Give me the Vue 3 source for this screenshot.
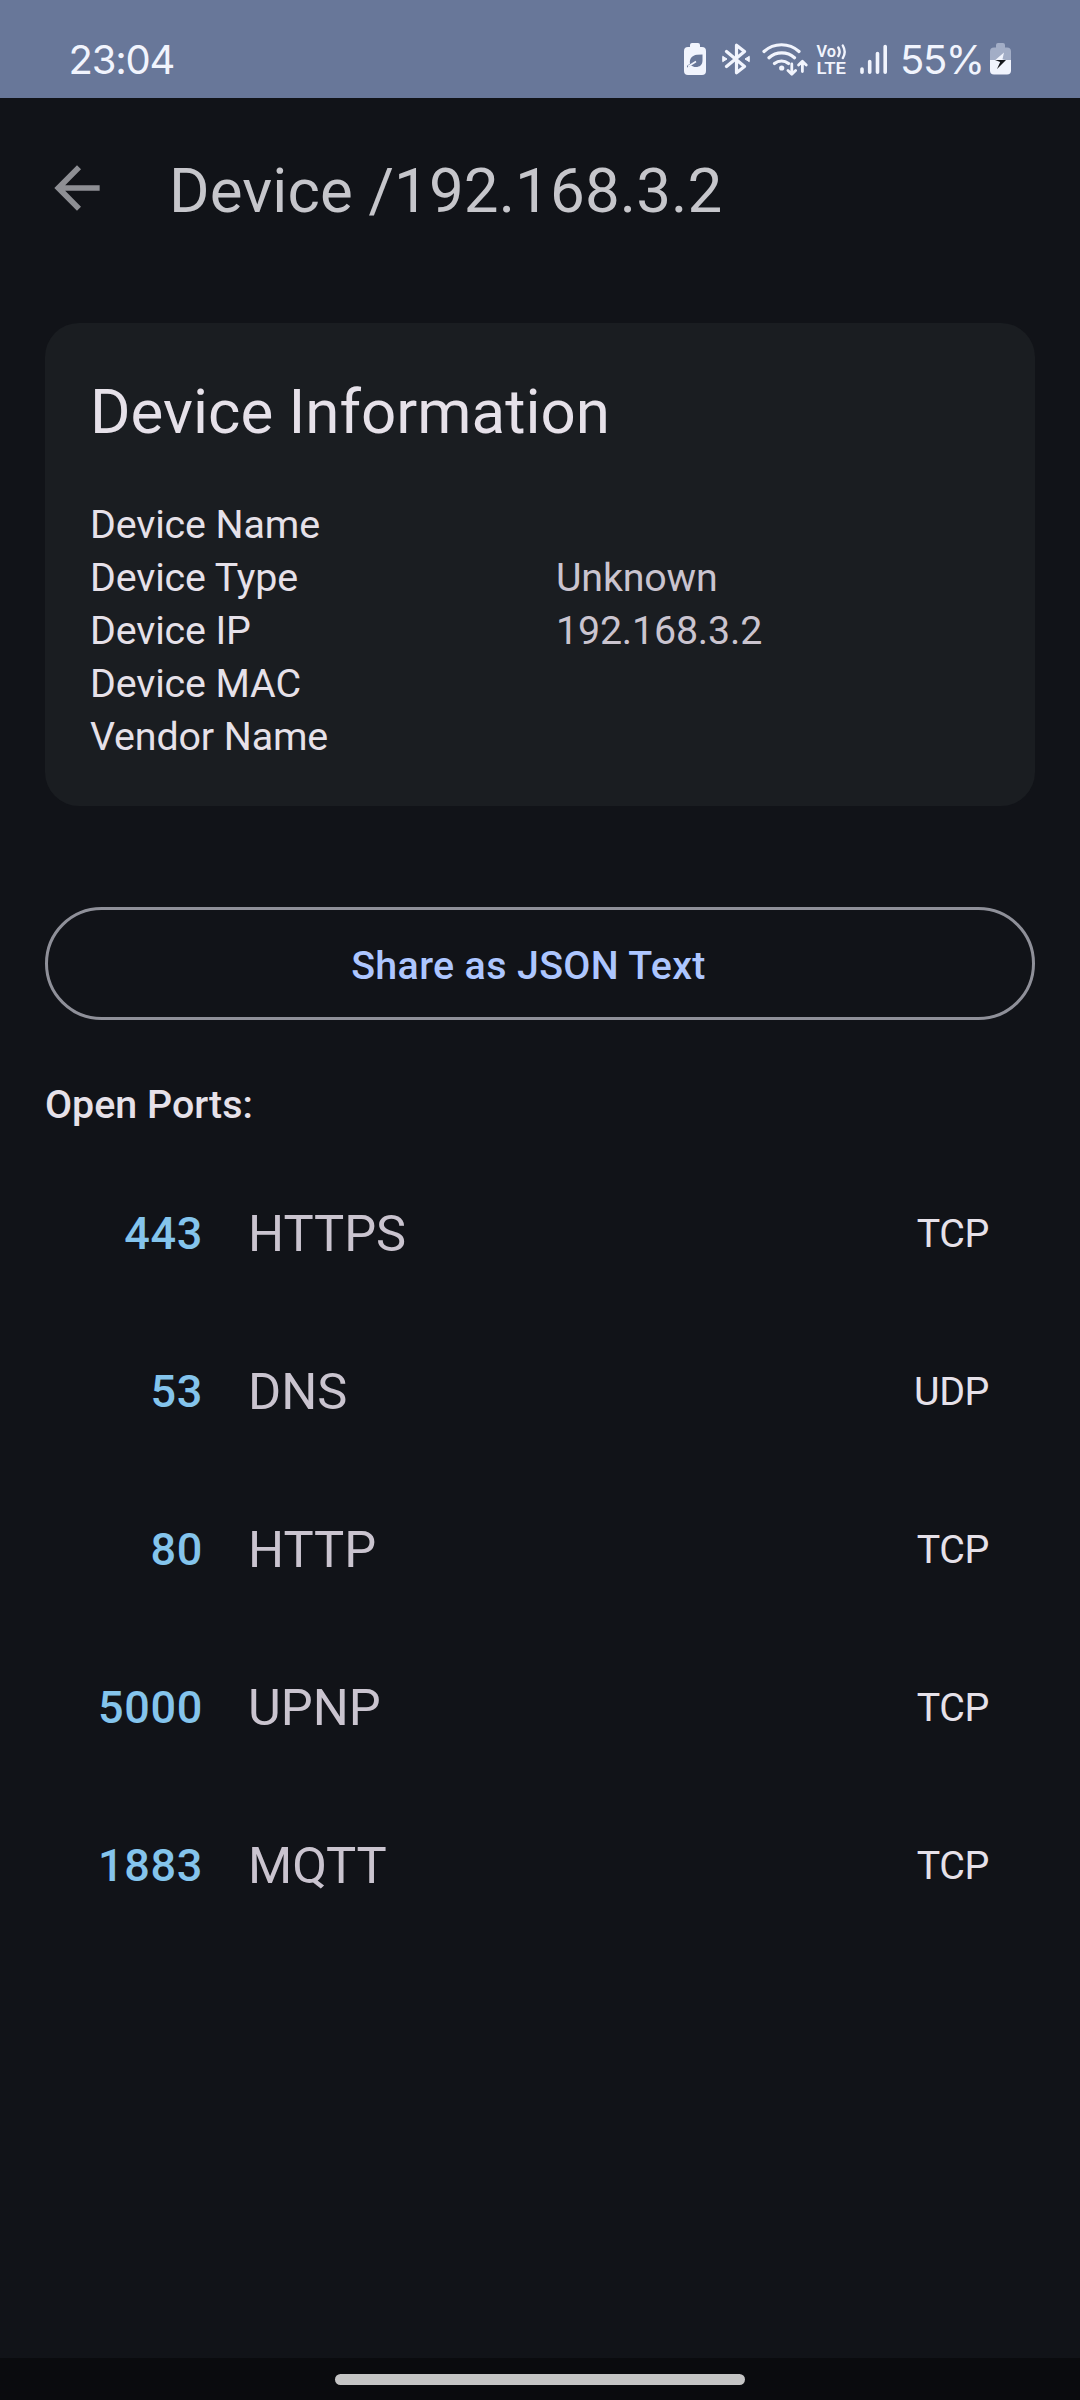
<script setup>
const info = [
  { label: 'Device Name', value: '' },
  { label: 'Device Type', value: 'Unknown' },
  { label: 'Device IP', value: '192.168.3.2' },
  { label: 'Device MAC', value: '' },
  { label: 'Vendor Name', value: '' },
]
const ports = [
  { port: 443, name: 'HTTPS', protocol: 'TCP' },
  { port: 53, name: 'DNS', protocol: 'UDP' },
  { port: 80, name: 'HTTP', protocol: 'TCP' },
  { port: 5000, name: 'UPNP', protocol: 'TCP' },
  { port: 1883, name: 'MQTT', protocol: 'TCP' },
]
</script>

<template>
  <div class="screen">
    <header class="status">
      <span class="clock">23:04</span>
      <div class="tray">
        <svg class="i-eco" width="22" height="32" viewBox="0 0 22 32">
          <path fill="#f1f4fd" d="M6 4V2a2 2 0 0 1 2-2h6a2 2 0 0 1 2 2v2h2a4 4 0 0 1 4 4v20a4 4 0 0 1-4 4H4a4 4 0 0 1-4-4V8a4 4 0 0 1 4-4z" />
          <path fill="#687799" d="M18.500 11.500v6c0 4.500-3 6.500-6.500 6.500-2.200 0-3.700-.6-4.700-1.500L3 24.500v-1.800l3-2c-.8-5 2.200-8.400 7-8.900z" />
          <path d="M4 23.500 12 18.500" stroke="#f1f4fd" stroke-width="1.500" />
        </svg>
        <svg class="i-bt" width="28" height="32" viewBox="0 0 28 32" fill="none" stroke="#f1f4fd" stroke-width="3.200" stroke-linejoin="round" stroke-linecap="round">
          <path d="M4.500 8.500 22.500 23.500 14.500 29.800V2.200L22.500 8.500 4.500 23.500" />
          <path d="M1 13.500 5 16 1 18.500zM27 13.500 23 16 27 18.500z" fill="#f1f4fd" stroke-width="1" />
        </svg>
        <svg class="i-wifi" width="46" height="34" viewBox="0 0 46 34" fill="none" stroke="#f1f4fd" stroke-width="3.200" stroke-linecap="round" stroke-linejoin="round">
          <path d="M2 9.500a26 26 0 0 1 35 0M7 15.700a19 19 0 0 1 25.500 0M12.500 21.500a11 11 0 0 1 14 0" />
          <circle cx="19.700" cy="26" r="2.600" fill="#f1f4fd" stroke="none" />
          <path d="M29.800 22v10M26 28.500l3.800 3.700 3.800-3.700M40.400 29.500V19.500M36.600 23l3.800-3.700L44.200 23" stroke-width="2.800" />
        </svg>
        <svg class="i-lte" width="32" height="32" viewBox="0 0 32 32" fill="#f1f4fd">
          <text x="0.500" y="13.500" textLength="19.500" lengthAdjust="spacingAndGlyphs">Vo</text>
          <text x="0.500" y="31" textLength="29.500" lengthAdjust="spacingAndGlyphs">LTE</text>
          <path d="M22.300 4.500a8 8 0 0 1 0 8.500M26.800 2.500a12 12 0 0 1 0 12.500" fill="none" stroke="#f1f4fd" stroke-width="2.400" stroke-linecap="round" />
        </svg>
        <svg class="i-sig" width="28" height="31" viewBox="0 0 28 31" stroke="#f1f4fd" stroke-width="3.600" stroke-linecap="round">
          <path d="M2 25v3.200M9.700 17.500v10.700M17.500 9.500v18.700M25.200 2.500v25.700" />
        </svg>
        <span class="pct">55%</span>
        <svg class="i-bat" width="22" height="32" viewBox="0 0 22 32">
          <path fill="#a2adc6" d="M6 4.500V2a2 2 0 0 1 2-2h5a2 2 0 0 1 2 2v2.500h2a4 4 0 0 1 4 4V17H0V8.500a4 4 0 0 1 4-4z" />
          <path fill="#f1f4fd" d="M0 17h21v10.500a4 4 0 0 1-4 4H4a4 4 0 0 1-4-4z" />
          <path fill="#f1f4fd" d="M14 9.500 5 17.300H16l-3.500-1z" />
          <path fill="#16181d" d="M5 17h11L7 26l3.200-7z" />
        </svg>
      </div>
    </header>

    <div class="appbar">
      <svg class="back" width="68" height="68" viewBox="0 0 24 24" fill="#8e8f94"><path d="M20 11H7.830l5.590-5.590L12 4l-8 8 8 8 1.410-1.410L7.830 13H20v-2z" /></svg>
      <h1>Device /192.168.3.2</h1>
    </div>

    <section class="card">
      <h2>Device Information</h2>
      <div v-for="row in info" :key="row.label" class="row">
        <span class="label">{{ row.label }}</span>
        <span class="value">{{ row.value }}</span>
      </div>
    </section>

    <button class="share">Share as JSON Text</button>

    <h3>Open Ports:</h3>
    <div v-for="p in ports" :key="p.port" class="port">
      <span class="num">{{ p.port }}</span>
      <span class="name">{{ p.name }}</span>
      <span class="proto">{{ p.protocol }}</span>
    </div>

    <footer class="nav"><div class="handle"></div></footer>
  </div>
</template>

<style>
body { margin: 0; background: #111318; }
</style>

<style scoped>
.screen { width: 1080px; height: 2400px; display: flex; flex-direction: column; background: #111318; font-family: Roboto, sans-serif; overflow: hidden; }
h1, h2, h3 { margin: 0; font-weight: 400; }
.status { height: 98px; flex: none; box-sizing: border-box; padding: 20px 68px 0 68.500px; display: flex; justify-content: space-between; align-items: center; background: #687799; color: #f1f4fd; font-family: Inter, sans-serif; font-size: 40px; }
.clock { letter-spacing: -1.200px; }
.tray { display: flex; align-items: center; }
.tray svg { flex: none; display: block; }
.i-bt { margin-left: 16px; }
.i-wifi { margin-left: 12.500px; }
.i-lte { margin-left: 8px; overflow: visible; font: 600 17px Roboto, sans-serif; }
.i-sig { margin-left: 12px; }
.pct { margin-left: 12px; width: 85.500px; letter-spacing: -1.400px; }
.i-bat { margin-left: 4.500px; }
.appbar { height: 180px; flex: none; box-sizing: border-box; padding-left: 43px; display: flex; align-items: center; }
h1 { font-size: 61.875px; line-height: 80px; margin-left: 58px; padding-top: 6px; letter-spacing: 0.120px; color: #c6c6cb; }
.card { margin: 45px 45px 0; height: 483px; flex: none; box-sizing: border-box; padding: 45px; border-radius: 34px; background: #1a1d21; }
h2 { font-size: 61.875px; line-height: 88px; margin-bottom: 42px; color: #e6e1e9; }
.row { display: flex; font-size: 39.375px; line-height: 53px; height: 53px; letter-spacing: -0.120px; }
.label { width: 466px; color: #e6e1e9; }
.value { letter-spacing: -0.180px; color: #cac4cf; }
.share { height: 113px; flex: none; margin: 101px 45px 0; box-sizing: border-box; padding: 4px 23px 0 0; border: 3px solid #8f9099; border-radius: 57px; background: none; color: #adc6ff; font: 500 39.375px Roboto, sans-serif; letter-spacing: 0.350px; }
h3 { font-size: 39.375px; font-weight: 500; line-height: 56px; margin: 57px 45px 21px; color: #e6e1e9; }
.port { height: 158px; flex: none; margin: 0 91px 0 45px; display: flex; align-items: center; }
.num { width: 158px; text-align: right; font-size: 45px; font-weight: 500; letter-spacing: 0.700px; color: #84c4ec; }
.name { flex: 1; margin-left: 45px; font-size: 50.625px; color: #cac4cf; }
.proto { font-size: 39.375px; letter-spacing: -0.400px; color: #e6e1e9; }
.nav { margin-top: auto; height: 42px; flex: none; display: flex; justify-content: center; background: #0a0b0e; }
.handle { width: 410px; height: 11px; margin-top: 16px; border-radius: 5.500px; background: #c5c5c5; }
</style>
